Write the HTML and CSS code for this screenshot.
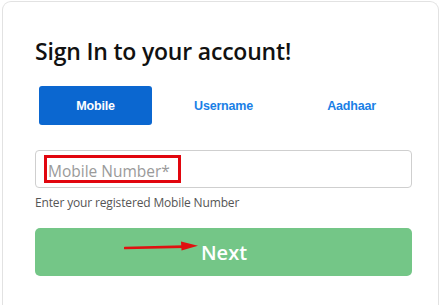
FILE: index.html
```html
<!DOCTYPE html>
<html>
<head>
<meta charset="utf-8">
<link rel="stylesheet" href="styles.css">
</head>
<body>
<div class="card">
  <h1 class="title">Sign In to your account!</h1>
  <div class="tabs">
    <div class="tab active">Mobile</div>
    <div class="tab">Username</div>
    <div class="tab">Aadhaar</div>
  </div>
  <div class="field">
    <div class="placeholder"><span class="highlight">Mobile Number*</span></div>
  </div>
  <div class="help">Enter your registered Mobile Number</div>
  <div class="next">
    <svg class="arrow" width="76" height="12" viewBox="0 0 76 12">
      <path d="M1 8 L60 6.6" stroke="#e01010" stroke-width="2.6" stroke-linecap="round" fill="none"/>
      <path d="M57 1.5 L74 5.8 L57.5 10.5 Z" fill="#e01010"/>
    </svg>
    <span class="next-label">Next</span>
  </div>
</div>
</body>
</html>
```

FILE: styles.css
```css
html, body {
  margin: 0;
  padding: 0;
  background: #ffffff;
}
body {
  width: 443px;
  height: 305px;
  overflow: hidden;
  font-family: "Open Sans", "Noto Sans", sans-serif;
}
.card {
  margin: 1px 0 0 2px;
  width: 437px;
  height: 304px;
  border: 1px solid #e2e2e2;
  border-bottom: none;
  border-radius: 9px 9px 0 0;
  box-sizing: border-box;
  padding: 33px 26px 0 32px;
}
.title {
  margin: 0;
  font-family: "Open Sans", sans-serif;
  font-weight: 600;
  font-size: 23px;
  line-height: 32px;
  color: #111;
  letter-spacing: -0.2px;
}
.tabs {
  margin-top: 19px;
  margin-left: 4px;
  display: grid;
  grid-template-columns: 113px 113px 113px;
  column-gap: 15px;
}
.tab {
  height: 39px;
  display: flex;
  align-items: center;
  justify-content: center;
  font-family: "Liberation Sans", Arial, sans-serif;
  font-weight: bold;
  font-size: 12.5px;
  color: #1a7fe6;
  letter-spacing: -0.2px;
}
.tab.active {
  background: #0b67d0;
  color: #fff;
  border-radius: 3px;
}
.field {
  margin-top: 25px;
  height: 38px;
  border: 1px solid #cfcfcf;
  border-radius: 4px;
  box-sizing: border-box;
  display: flex;
  align-items: center;
  padding-left: 8px;
}
.highlight {
  display: inline-block;
  border: 3px solid #e1060e;
  padding: 0 10px 0 1px;
  height: 28px;
  line-height: 26px;
  box-sizing: border-box;
  font-size: 15.5px;
  color: #9a9a9a;
  width: 137px;
  white-space: nowrap;
}
.help {
  margin-top: 6px;
  font-size: 12px;
  color: #555;
  line-height: 18px;
  letter-spacing: -0.15px;
}
.next {
  margin-top: 16px;
  height: 48px;
  background: #74c687;
  border-radius: 5px;
  display: flex;
  align-items: center;
  justify-content: center;
  position: relative;
}
.next-label {
  color: #fff;
  font-weight: 600;
  font-size: 20px;
  margin-left: 1px;
}
.arrow {
  position: absolute;
  left: 89px;
  top: 12px;
}
```
